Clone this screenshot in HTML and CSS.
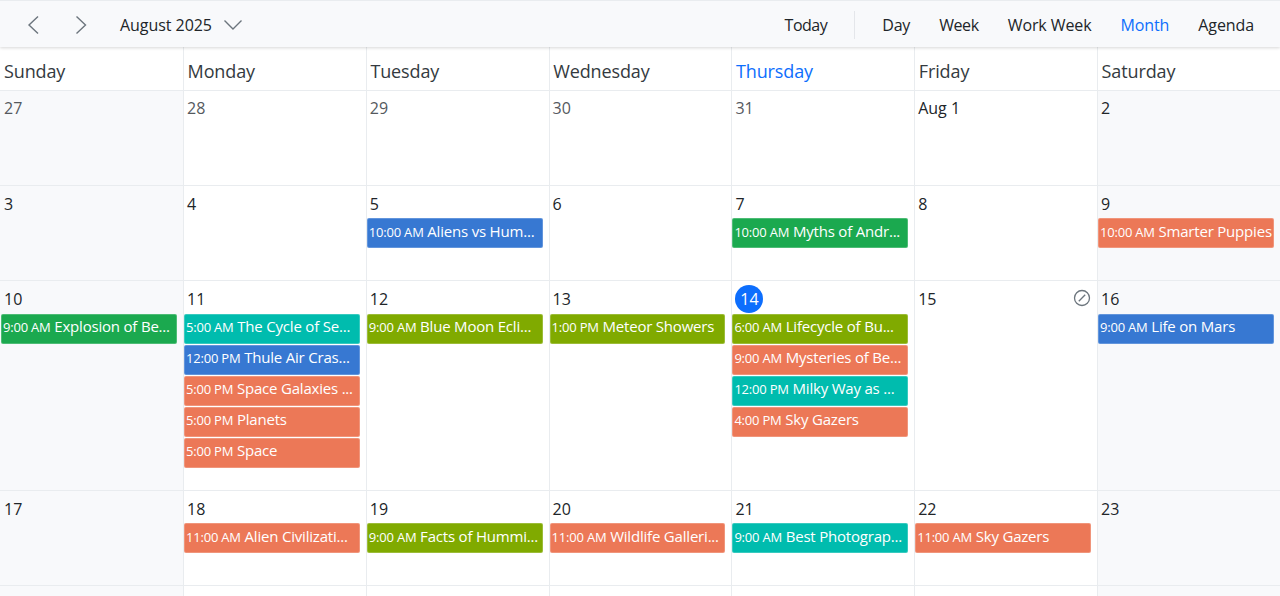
FILE: index.html
```html
<!DOCTYPE html>
<html lang="en">
<head>
<meta charset="utf-8">
<title>Calendar</title>
<link rel="stylesheet" href="styles.css">
</head>
<body>
<header class="toolbar">
  <div class="nav">
    <button class="icon-btn" aria-label="Previous"><svg width="14" height="20" viewBox="0 0 14 20"><path d="M11 1.500 2 10l9 8.500" class="chev"/></svg></button>
    <button class="icon-btn" aria-label="Next"><svg width="14" height="20" viewBox="0 0 14 20"><path d="M2.500 1.500 11.500 10l-9 8.500" class="chev"/></svg></button>
    <div class="month-pick">August 2025<svg width="20" height="12" viewBox="0 0 20 12"><path d="M1.500 1.500 10 10l8.500-8.500" class="chev"/></svg></div>
  </div>
  <nav class="views">
    <span class="v-today">Today</span>
    <span class="sep"></span>
    <span class="v-day">Day</span><span class="v-week">Week</span><span>Work Week</span><span class="on">Month</span><span>Agenda</span>
  </nav>
</header>
<main class="cal">
  <div class="head-row">
    <div class="hd">Sunday</div><div class="hd">Monday</div><div class="hd">Tuesday</div><div class="hd">Wednesday</div><div class="hd on">Thursday</div><div class="hd">Friday</div><div class="hd">Saturday</div>
  </div>
  <div class="week w95 first">
    <div class="day off"><div class="num dim">27</div></div>
    <div class="day"><div class="num dim">28</div></div>
    <div class="day"><div class="num dim">29</div></div>
    <div class="day"><div class="num dim">30</div></div>
    <div class="day"><div class="num dim">31</div></div>
    <div class="day"><div class="num">Aug 1</div></div>
    <div class="day off"><div class="num">2</div></div>
  </div>
  <div class="week w95">
    <div class="day off"><div class="num">3</div></div>
    <div class="day"><div class="num">4</div></div>
    <div class="day"><div class="num">5</div><div class="ev blue"><small>10:00 AM</small> Aliens vs Hum...</div></div>
    <div class="day"><div class="num">6</div></div>
    <div class="day"><div class="num">7</div><div class="ev green"><small>10:00 AM</small> Myths of Andr...</div></div>
    <div class="day"><div class="num">8</div></div>
    <div class="day off"><div class="num">9</div><div class="ev orange"><small>10:00 AM</small> Smarter Puppies</div></div>
  </div>
  <div class="week w210 busy">
    <div class="day off"><div class="num">10</div><div class="ev green"><small>9:00 AM</small> Explosion of Be...</div></div>
    <div class="day"><div class="num">11</div>
      <div class="ev teal"><small>5:00 AM</small> The Cycle of Se...</div>
      <div class="ev blue"><small>12:00 PM</small> Thule Air Cras...</div>
      <div class="ev orange"><small>5:00 PM</small> Space Galaxies ...</div>
      <div class="ev orange"><small>5:00 PM</small> Planets</div>
      <div class="ev orange"><small>5:00 PM</small> Space</div>
    </div>
    <div class="day"><div class="num">12</div><div class="ev olive"><small>9:00 AM</small> Blue Moon Ecli...</div></div>
    <div class="day"><div class="num">13</div><div class="ev olive"><small>1:00 PM</small> Meteor Showers</div></div>
    <div class="day"><div class="num today-num"><span>14</span></div>
      <div class="ev olive"><small>6:00 AM</small> Lifecycle of Bu...</div>
      <div class="ev orange"><small>9:00 AM</small> Mysteries of Be...</div>
      <div class="ev teal"><small>12:00 PM</small> Milky Way as ...</div>
      <div class="ev orange"><small>4:00 PM</small> Sky Gazers</div>
    </div>
    <div class="day"><div class="num">15</div>
      <svg class="block" width="18" height="18" viewBox="0 0 18 18"><circle cx="9" cy="9" r="7.500"/><path d="M5.800 12.200 12.200 5.800"/></svg>
    </div>
    <div class="day off"><div class="num">16</div><div class="ev blue"><small>9:00 AM</small> Life on Mars</div></div>
  </div>
  <div class="week w95">
    <div class="day off"><div class="num">17</div></div>
    <div class="day"><div class="num">18</div><div class="ev orange"><small>11:00 AM</small> Alien Civilizati...</div></div>
    <div class="day"><div class="num">19</div><div class="ev olive"><small>9:00 AM</small> Facts of Hummi...</div></div>
    <div class="day"><div class="num">20</div><div class="ev orange"><small>11:00 AM</small> Wildlife Galleri...</div></div>
    <div class="day"><div class="num">21</div><div class="ev teal"><small>9:00 AM</small> Best Photograp...</div></div>
    <div class="day"><div class="num">22</div><div class="ev orange"><small>11:00 AM</small> Sky Gazers</div></div>
    <div class="day off"><div class="num">23</div></div>
  </div>
  <div class="week w95">
    <div class="day off"></div><div class="day"></div><div class="day"></div><div class="day"></div><div class="day"></div><div class="day"></div><div class="day off"></div>
  </div>
</main>
</body>
</html>
```
FILE: styles.css
```css
* { box-sizing: border-box; }
html, body { margin: 0; height: 596px; overflow: hidden; background: #fff; }
body { font-family: "Open Sans", "Noto Sans", sans-serif; color: #212529; }
.toolbar {
  height: 47px;
  display: flex;
  align-items: center;
  justify-content: space-between;
  padding: 1px 26px 0 27px;
  background: #f8f9fb;
  border-top: 1px solid #e9ecef;
  box-shadow: 0 1px 3px rgba(0,0,0,.16);
  position: relative;
  font-size: 16px;
}
.nav { display: flex; align-items: center; }
.icon-btn { width: 47px; height: 30px; padding: 0; border: 0; background: none; display: flex; align-items: center; }
.chev { fill: none; stroke: #6c757d; stroke-width: 1.400; }
.month-pick { display: flex; align-items: center; gap: 11px; margin-left: -1px; letter-spacing: -.05px; }
.views { display: flex; align-items: center; gap: 29px; letter-spacing: -.1px; }
.v-today { letter-spacing: -.5px; }
.v-day { letter-spacing: -.2px; }
.v-week { letter-spacing: -.4px; }
.sep { width: 1px; height: 28px; background: #e4e6ea; margin: 0 -2px; }
.on { color: #0d6efd; }
.cal { height: 549px; overflow: hidden; }
.head-row, .week { display: grid; grid-template-columns: 184px repeat(6, 182.8px); }
.hd {
  height: 44px;
  padding: 12px 4px 0 3.600px;
  font-size: 18px;
  letter-spacing: -.12px;
  line-height: 25px;
  border-right: 1px solid #e9ecef;
  border-bottom: 1px solid #e9ecef;
  background: #fff;
  color: #343a40;
}
.hd:first-child { padding-left: 4px; }
.hd.on { color: #0d6efd; }
.week { border-bottom: 1px solid #e9ecef; }
.w95 { height: 95px; }
.w210 { height: 210px; }
.day {
  position: relative;
  min-width: 0;
  padding: 0 6px 0 0;
  border-right: 1px solid #e9ecef;
  background: #fff;
}
.day:first-child { padding-left: 1px; }
.day.off { background: #f8f9fb; }
.num {
  height: 32px;
  padding: 7px 0 0 3px;
  font-size: 16px;
  line-height: 22px;
}
.first .num { padding-top: 6px; }
.busy .num { height: 33px; }
.dim { color: #55595e; }
.today-num { padding: 4px 0 0 3px; }
.today-num span {
  display: flex;
  width: 28px;
  height: 28px;
  border-radius: 50%;
  align-items: center;
  justify-content: center;
  background: #0d6efd;
  color: #fff;
}
.block { position: absolute; top: 8px; right: 6px; fill: none; stroke: #6c757d; stroke-width: 1.300; }
.ev {
  height: 30px;
  margin: 0 0 1px;
  padding: 0 0 0 1px;
  border: 1px solid rgba(255,255,255,.22);
  border-radius: 2px;
  color: #fff;
  font-size: 15px;
  letter-spacing: -.2px;
  line-height: 25px;
  white-space: nowrap;
  overflow: hidden;
}
.busy .ev { line-height: 23px; }
.ev small { font-size: 13px; letter-spacing: -.2px; }
.blue { background: #3778d2; }
.green { background: #1ba94f; }
.orange { background: #ec7857; }
.teal { background: #00bcae; }
.olive { background: #80aa00; }
```
